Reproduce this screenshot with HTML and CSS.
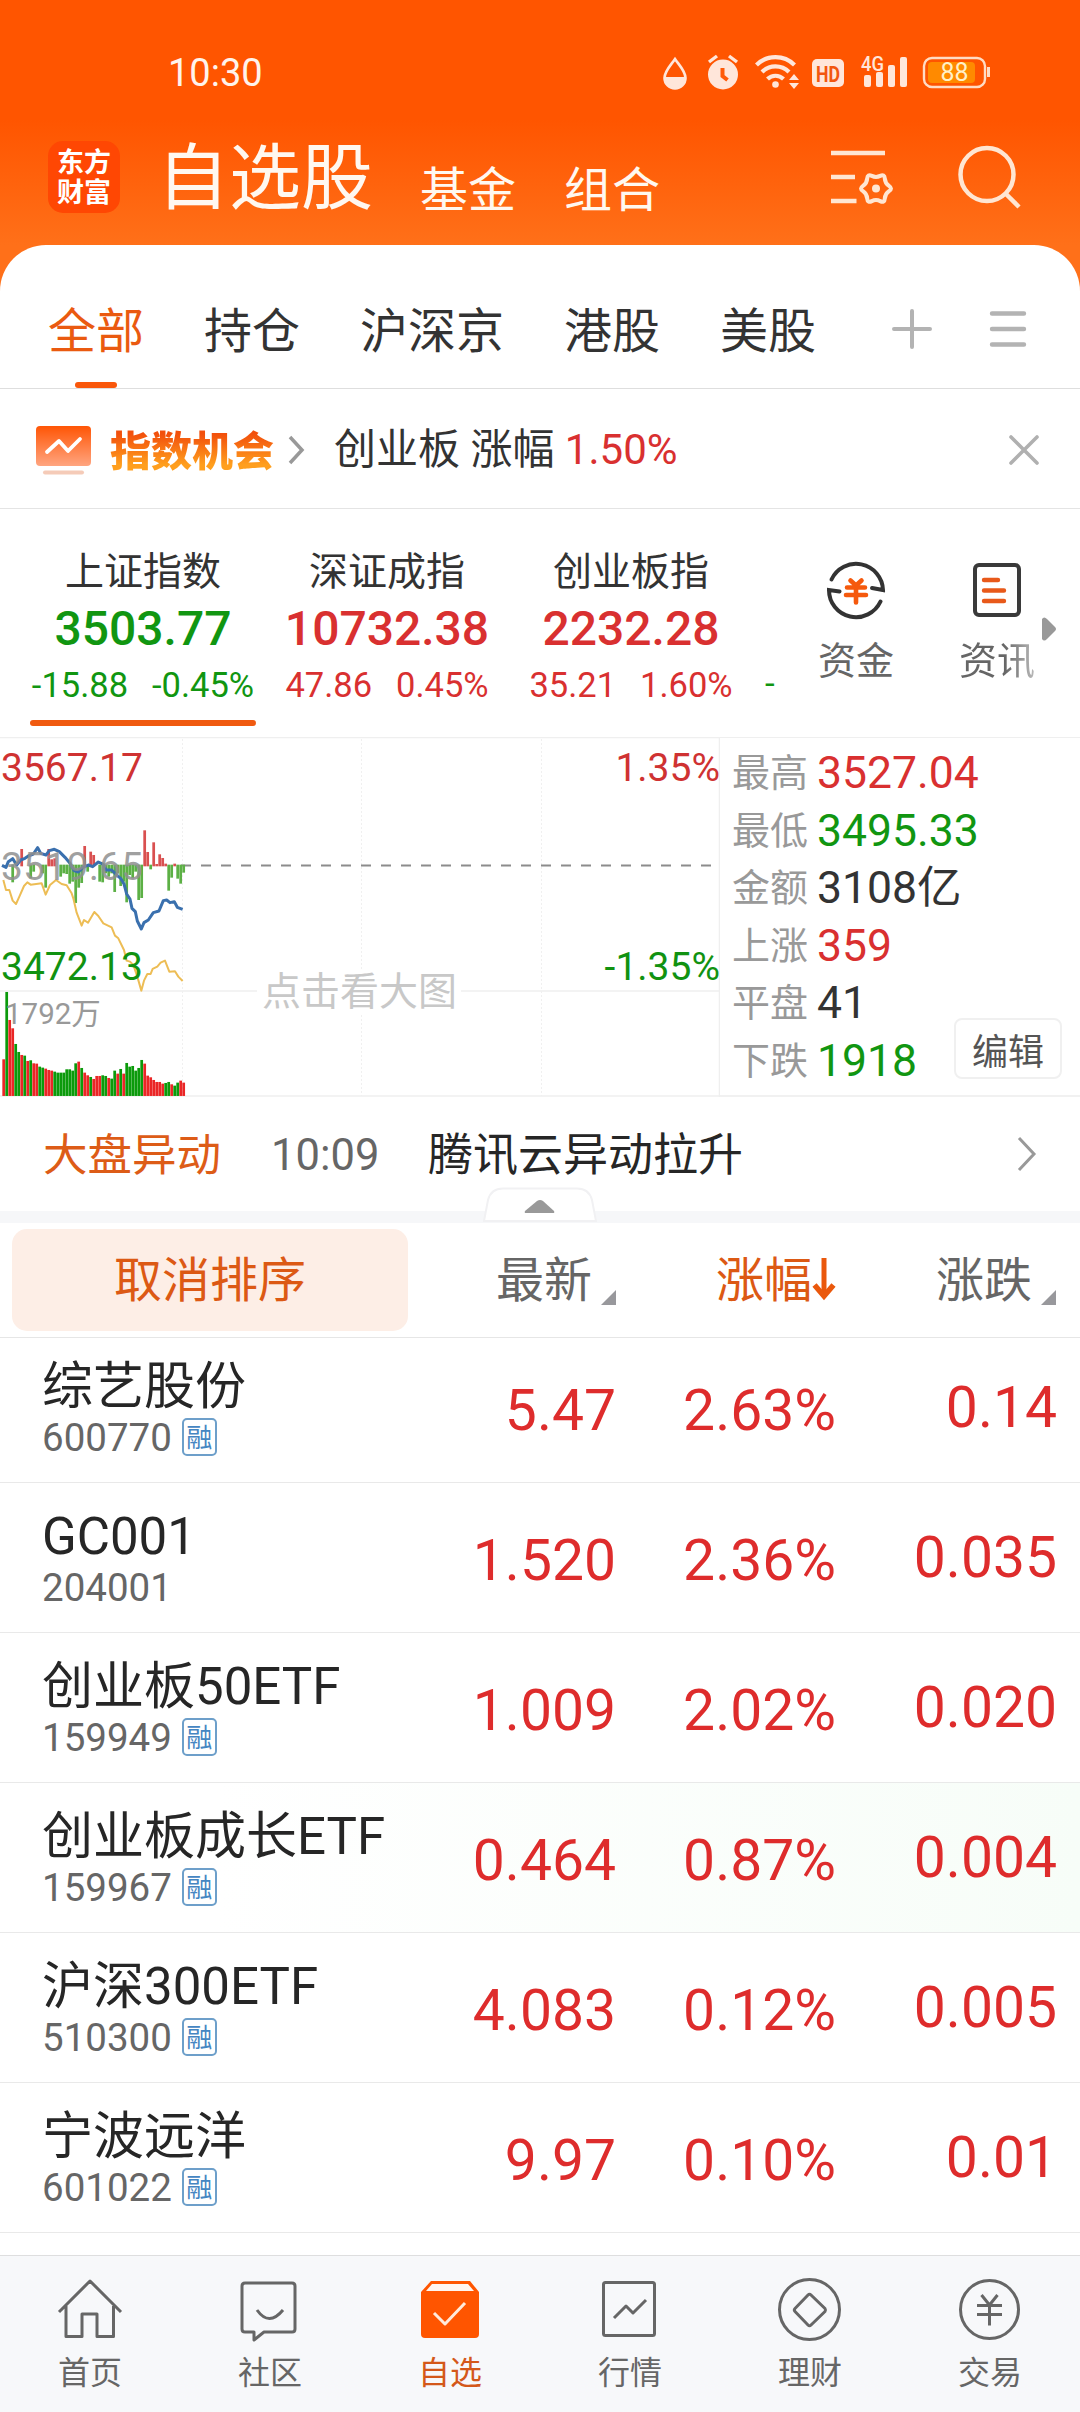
FILE: index.html
```html
<!DOCTYPE html>
<html lang="zh-CN">
<head>
    <meta charset="UTF-8">
    <meta name="viewport" content="width=device-width, initial-scale=1.0">
    <title>自选股</title>
    <link rel="stylesheet" href="styles.css">
</head>
<body>
<div class="header">
    <div class="status">
        <span class="time">10:30</span>
        <svg class="status-icons" width="330" height="40" viewBox="0 0 330 40">
            <g fill="#ffe6da">
                <path d="M15 7C11 13 4.500 19 4.500 26a10.500 10.500 0 0 0 21 0C25.500 19 19 13 15 7z" fill="none" stroke="#ffe6da" stroke-width="2.600"/>
                <path d="M4 25h22a11 11.500 0 0 1-22 0z"/>
                <circle cx="63" cy="22.500" r="15"/>
                <path d="M49 10l8-6M77 10l-8-6" stroke="#ffe6da" stroke-width="3.400"/>
                <path d="M62.500 16v8l5 4" fill="none" stroke="#ff5a08" stroke-width="4"/>
                <path d="M96.500 13a27 27 0 0 1 38 0M102 20a19 19 0 0 1 27 0M107.500 27a11.500 11.500 0 0 1 16 0" fill="none" stroke="#ffe6da" stroke-width="4.200"/>
                <circle cx="115.500" cy="32.500" r="3.300"/>
                <path d="M129 28l5-6 5 6zM129 31h10l-5 6z"/>
                <rect x="152" y="7" width="32" height="28" rx="5"/>
                <rect x="204" y="23" width="7" height="12" rx="2"/>
                <rect x="216" y="20" width="7" height="15" rx="2"/>
                <rect x="228" y="13" width="7" height="22" rx="2"/>
                <rect x="240" y="5" width="7" height="30" rx="2"/>
            </g>
            <text x="168" y="29.500" text-anchor="middle" font-size="22" font-weight="700" textLength="24" lengthAdjust="spacingAndGlyphs" fill="#f2560f">HD</text>
            <text x="201" y="18.500" font-size="21" font-weight="500" textLength="23" lengthAdjust="spacingAndGlyphs" fill="#ffe6da">4G</text>
            <rect x="264" y="6" width="61" height="29" rx="8" fill="none" stroke="#ffdcc4" stroke-width="2.400"/>
            <rect x="268" y="10" width="47" height="21" rx="4" fill="#ff8a00"/>
            <path d="M328.500 15v10" stroke="#ffdcc4" stroke-width="3"/>
            <text x="294.500" y="29" text-anchor="middle" font-size="25" textLength="28" lengthAdjust="spacingAndGlyphs" fill="#fff0c8">88</text>
        </svg>
    </div>
    <div class="topbar">
        <div class="logo">东方<br>财富</div>
        <span class="top-tab active">自选股</span>
        <span class="top-tab">基金</span>
        <span class="top-tab">组合</span>
        <svg class="filter" width="64" height="60" viewBox="0 0 64 60" fill="none" stroke="#ffe6d2" stroke-width="4.500">
            <path d="M0 5h54M0 29h24M0 53h25.500"/>
            <path d="M58 37.800Q62 40.500 58 43.200Q54.100 45.800 53.800 50.500Q53.500 55.200 49.200 53.100Q45 51 40.800 53.100Q36.500 55.200 36.200 50.500Q35.900 45.800 32 43.200Q28 40.500 32 37.800Q35.900 35.200 36.200 30.500Q36.500 25.800 40.800 27.900Q45 30 49.200 27.900Q53.500 25.800 53.800 30.500Q54.100 35.200 58 37.800z" stroke-width="4"/>
            <circle cx="45" cy="40.500" r="4" fill="#ffe6d2" stroke="none"/>
        </svg>
        <svg width="64" height="66" viewBox="0 0 64 66" fill="none" stroke="#ffe6d2" stroke-width="4.500">
            <circle cx="29" cy="29.500" r="26.500"/>
            <path d="M47 48L61 62"/>
        </svg>
    </div>
</div>

<div class="sheet">
    <div class="tabs">
        <span class="tab on">全部</span>
        <span class="tab">持仓</span>
        <span class="tab">沪深京</span>
        <span class="tab">港股</span>
        <span class="tab">美股</span>
        <svg class="plus" width="40" height="40" viewBox="0 0 40 40" stroke="#b3b3b3" stroke-width="4" stroke-linecap="round"><path d="M20 2v36M2 20h36"/></svg>
        <svg width="38" height="38" viewBox="0 0 38 38" stroke="#b3b3b3" stroke-width="4.400" stroke-linecap="round"><path d="M3 3.500h32M3 19h32M3 34.500h32"/></svg>
    </div>

    <div class="chance">
        <svg width="56" height="50" viewBox="0 0 56 50">
            <defs>
                <linearGradient id="chanceBg" x1="0" y1="0" x2="0" y2="1">
                    <stop offset="0" stop-color="#ff5505"/>
                    <stop offset="1" stop-color="#ffa580"/>
                </linearGradient>
            </defs>
            <rect x="0" y="1" width="55" height="40" rx="4" fill="url(#chanceBg)"/>
            <path d="M11 27l12-11 9 10 12-12" fill="none" stroke="#fff" stroke-width="3.800" stroke-linecap="round" stroke-linejoin="round"/>
            <rect x="7" y="45.500" width="41" height="4" rx="2" fill="#f5cbb8"/>
        </svg>
        <span class="chance-name">指数机会</span>
        <svg class="chance-arrow" width="18" height="30" viewBox="0 0 18 30" fill="none" stroke="#999" stroke-width="3.500"><path d="M2 2l12 13L2 28"/></svg>
        <span class="chance-text">创业板 涨幅 <em class="red">1.50%</em></span>
        <svg class="close" width="32" height="32" viewBox="0 0 32 32" stroke="#b0b0b0" stroke-width="3.600" stroke-linecap="round"><path d="M3 3l26 26M29 3L3 29"/></svg>
    </div>

    <div class="indexes">
        <div class="index green current">
            <p class="index-name">上证指数</p>
            <p class="index-num">3503.77</p>
            <p class="index-diff"><span>-15.88</span><span>-0.45%</span></p>
        </div>
        <div class="index red">
            <p class="index-name">深证成指</p>
            <p class="index-num">10732.38</p>
            <p class="index-diff"><span>47.86</span><span>0.45%</span></p>
        </div>
        <div class="index red">
            <p class="index-name">创业板指</p>
            <p class="index-num">2232.28</p>
            <p class="index-diff"><span>35.21</span><span>1.60%</span></p>
        </div>
        <div class="index-more green">-</div>
        <div class="tool">
            <svg width="60" height="60" viewBox="0 0 60 60" fill="none" stroke="#333" stroke-width="4">
                <path d="M5.500 19.500A27 27 0 0 1 57 30l-11-2" stroke-linecap="round"/>
                <path d="M54.500 41.500A27 27 0 0 1 3 30l10.500 1.500" stroke-linecap="round"/>
                <path d="M24.500 20.500l5.500 5 5.500-5M21 27.500h18M20 35h20M30 26v16.500" stroke="#f5590d" stroke-width="4.600" stroke-linecap="round"/>
            </svg>
            <span>资金</span>
        </div>
        <div class="tool">
            <svg width="60" height="60" viewBox="0 0 60 60" fill="none" stroke="#3a3a3a" stroke-width="4">
                <rect x="8" y="5" width="44" height="50" rx="4"/>
                <path d="M17 20h14M17 30.500h20M17 41h20" stroke="#e8591a" stroke-width="4.400" stroke-linecap="round"/>
            </svg>
            <span class="fade">资讯</span>
        </div>
        <svg class="more-arrow" width="16" height="26" viewBox="0 0 16 26"><path d="M1 3q2-3 5 0l8 8q2 2 0 4l-8 8q-3 3-5 0z" fill="#999"/></svg>
    </div>

    <div class="market">
        <svg class="chart" width="720" height="360" viewBox="0 0 720 360">
            <path d="M0 .500h720M0 254h720M0 359h720M719.500 0v360" stroke="#efefef" stroke-width="1.500" fill="none"/>
            <path d="M182.500 2v357M361.500 2v357M541.500 2v357" stroke="#f0f0f0" stroke-dasharray="2 2"/>
            <path d="M181 128.500h534" stroke="#8c8c8c" stroke-width="2" stroke-dasharray="10 10"/>
            <g transform="scale(.3333) translate(0 -21)">
                <g id="bars"></g>
                <g id="volume"></g>
                <polyline fill="none" stroke="#edbd55" stroke-width="6" stroke-linejoin="round" points="10,450 18,480 28,480 38,512 48,522 58,500 72,468 82,457 92,464 125,460 137,494 150,465 168,450 185,462 200,466 215,490 220,505 230,548 245,587 252,570 264,578 283,546 295,558 310,580 335,592 345,617 355,625 372,660 380,692 390,695 400,705 412,740 424,782 432,752 442,732 452,732 458,717 472,710 482,698 495,692 508,725 525,724 535,740 548,753"/>
                <polyline fill="none" stroke="#3a70ae" stroke-width="9" stroke-linejoin="round" points="6,406 18,412 25,395 38,386 50,405 62,390 75,385 85,378 100,372 113,353 122,370 138,375 148,362 163,358 178,365 195,382 210,400 222,422 235,426 250,412 265,405 278,410 295,396 310,403 318,420 335,420 352,437 362,445 372,462 380,492 390,507 396,535 406,545 412,573 424,597 432,578 445,570 460,548 477,543 490,512 500,510 510,518 523,515 532,532 548,538"/>
            </g>
            <rect x="257" y="234" width="204" height="42" fill="#fff"/>
            <g font-size="39">
                <text x="1" y="44" fill="#cf3232">3567.17</text>
                <text x="1" y="143" fill="#8f8f8f" fill-opacity=".85">3519.65</text>
                <text x="1" y="242.500" fill="#119211">3472.13</text>
                <text x="720" y="44" text-anchor="end" fill="#cf3232">1.35%</text>
                <text x="720" y="242.500" text-anchor="end" fill="#119211">-1.35%</text>
                <text x="262" y="268" fill="#c8c8c8">点击看大图</text>
                <text x="5" y="287" font-size="29.500" fill="#999">1792万</text>
            </g>
        </svg>
        <div class="stats">
            <p><label>最高</label><span class="red">3527.04</span></p>
            <p><label>最低</label><span class="green">3495.33</span></p>
            <p><label>金额</label><span>3108亿</span></p>
            <p><label>上涨</label><span class="red">359</span></p>
            <p><label>平盘</label><span>41</span></p>
            <p><label>下跌</label><span class="green">1918</span></p>
            <button class="edit">编辑</button>
        </div>
    </div>

    <div class="news">
        <span class="news-type">大盘异动</span>
        <span class="news-time">10:09</span>
        <span class="news-title">腾讯云异动拉升</span>
        <svg width="22" height="36" viewBox="0 0 22 36" fill="none" stroke="#999" stroke-width="3"><path d="M3 2l15 16L3 34"/></svg>
    </div>
    <div class="band">
        <svg class="fold" width="114" height="36" viewBox="0 0 114 36">
            <path d="M1 34L5 13Q8 1.500 20 1.500h74q12 0 15 11.500l4 21z" fill="#fff" stroke="#f1f1f3" stroke-width="2"/>
            <path d="M43 26q-2 0-1-2l12-10q3-2 6 0l11 10q1 2-1 2z" fill="#999"/>
        </svg>
    </div>

    <div class="list-head">
        <span class="cancel">取消排序</span>
        <span class="head-col">最新<i class="corner"></i></span>
        <span class="head-col sorted">涨幅<svg width="24" height="44" viewBox="0 0 24 44" fill="none" stroke="#ea580c"><path d="M12 1v38" stroke-width="5"/><path d="M2.500 28l9.500 11 9.500-11" stroke-width="5.500"/></svg></span>
        <span class="head-col last">涨跌<i class="corner"></i></span>
    </div>

    <div class="list">
        <div class="row first">
            <div class="stock"><p class="name">综艺股份</p><p class="code">600770<b>融</b></p></div>
            <span class="num">5.47</span><span class="num pct">2.63%</span><span class="num chg">0.14</span>
        </div>
        <div class="row">
            <div class="stock"><p class="name">GC001</p><p class="code">204001</p></div>
            <span class="num">1.520</span><span class="num pct">2.36%</span><span class="num chg">0.035</span>
        </div>
        <div class="row">
            <div class="stock"><p class="name">创业板50ETF</p><p class="code">159949<b>融</b></p></div>
            <span class="num">1.009</span><span class="num pct">2.02%</span><span class="num chg">0.020</span>
        </div>
        <div class="row flash">
            <div class="stock"><p class="name">创业板成长ETF</p><p class="code">159967<b>融</b></p></div>
            <span class="num">0.464</span><span class="num pct">0.87%</span><span class="num chg">0.004</span>
        </div>
        <div class="row">
            <div class="stock"><p class="name">沪深300ETF</p><p class="code">510300<b>融</b></p></div>
            <span class="num">4.083</span><span class="num pct">0.12%</span><span class="num chg">0.005</span>
        </div>
        <div class="row">
            <div class="stock"><p class="name">宁波远洋</p><p class="code">601022<b>融</b></p></div>
            <span class="num">9.97</span><span class="num pct">0.10%</span><span class="num chg">0.01</span>
        </div>
    </div>
</div>

<div class="nav">
    <div class="nav-item">
        <svg width="66" height="66" viewBox="0 0 66 66"><path d="M2 35L33 4l31 31M9 29v30.500h16V37h15v22.500h16.500V29"/></svg>
        <span>首页</span>
    </div>
    <div class="nav-item">
        <svg width="66" height="66" viewBox="0 0 66 66"><path d="M8 6h47q3 0 3 3v43q0 3-3 3H27l-10 8v-8H8q-3 0-3-3V9q0-3 3-3zM20 33q12 17 26 0"/></svg>
        <span>社区</span>
    </div>
    <div class="nav-item on">
        <svg width="66" height="66" viewBox="0 0 66 66">
            <path d="M4 15L14 4h39l9 11v42q0 4-4 4H8q-4 0-4-4z" fill="#ff5500" stroke="none"/>
            <path d="M15 7h36l6 7H9z" fill="#fff5ef" stroke="none"/>
            <path d="M17 36l11 11 20-21" stroke="#ffeadb"/>
        </svg>
        <span>自选</span>
    </div>
    <div class="nav-item">
        <svg width="66" height="66" viewBox="0 0 66 66"><rect x="6.500" y="5.500" width="51" height="53" rx="2"/><path d="M17 41l12-12 7 7 13-13"/></svg>
        <span>行情</span>
    </div>
    <div class="nav-item">
        <svg width="66" height="66" viewBox="0 0 66 66"><circle cx="32.500" cy="32.500" r="30"/><path d="M31 18q1.500-1.500 3 0l14 13.500q1 1.500 0 3l-14 13.500q-1.500 1.500-3 0L18 34.500q-1.500-1.500 0-3z"/></svg>
        <span>理财</span>
    </div>
    <div class="nav-item">
        <svg width="66" height="66" viewBox="0 0 66 66"><circle cx="32.500" cy="32.500" r="29"/><path d="M24.500 18l8 10 8-10M20 28.500h25M20 37.500h25M32.500 28v20.500"/></svg>
        <span>交易</span>
    </div>
</div>
<script src="script.js"></script>
</body>
</html>
```
FILE: styles.css
```css
body {
  margin: 0;
  width: 1080px;
  height: 2412px;
  overflow: hidden;
  background: #fff;
  color: #333;
  font-family: Roboto, "Noto Sans CJK SC", sans-serif;
  display: flex;
  flex-direction: column;
}
p {
  margin: 0;
}
svg {
  display: block;
  flex: none;
}
em, i, b {
  font-style: normal;
  font-weight: 400;
}
.red {
  color: #d93030;
}
.green {
  color: #119611;
}

/* header */
.header {
  height: 300px;
  box-sizing: border-box;
  background: linear-gradient(#ff5500 0, #ff5500 120px, #ff7019 245px);
}
.status {
  height: 92px;
  padding: 52px 90px 0 168px;
  box-sizing: border-box;
  display: flex;
  justify-content: space-between;
}
.time {
  font-size: 38px;
  line-height: 42px;
  color: #fff3ec;
}
.status-icons {
  font-family: Roboto, sans-serif;
}
.topbar {
  height: 153px;
  display: flex;
  align-items: center;
  padding: 0 58px 0 48px;
  color: #fff8f0;
}
.logo {
  width: 72px;
  height: 72px;
  margin: 16px 37px 0 0;
  padding-top: 5px;
  box-sizing: border-box;
  border-radius: 15px;
  background: #ff4703;
  text-align: center;
  font: 700 27px/30px "Noto Sans CJK SC", sans-serif;
  color: #fff;
}
.top-tab {
  font-size: 48px;
  line-height: 60px;
  margin: 44px 48px 0 0;
}
.top-tab.active {
  font-size: 72px;
  line-height: 80px;
  margin-top: 21px;
  margin-right: 47px;
}
.filter {
  margin: 18px 63px 0 auto;
}
.topbar svg:last-child {
  margin-top: 18px;
}

/* white sheet */
.sheet {
  margin-top: -55px;
  height: 2010px;
  background: #fff;
  border-radius: 46px 46px 0 0;
}
.tabs {
  height: 144px;
  box-sizing: border-box;
  padding: 0 53px 0 48px;
  border-bottom: 1px solid #dedede;
  display: flex;
  gap: 60px;
}
.tab {
  font-size: 48px;
  line-height: 142px;
  padding-top: 16px;
  height: 127px;
  position: relative;
}
.tab.on {
  color: #ea5a10;
}
.tab.on::after {
  content: "";
  position: absolute;
  left: 27px;
  bottom: 0;
  width: 42px;
  height: 6px;
  border-radius: 3px;
  background: #f9570b;
}
.tabs svg {
  margin-top: 65px;
}
.tabs .plus {
  margin: 64px -3px 0 auto;
}
.chance {
  height: 120px;
  box-sizing: border-box;
  border-bottom: 1px solid #e4e4e4;
  display: flex;
  align-items: center;
  padding: 2px 40px 0 36px;
}
.chance-name {
  margin: -4px 0 0 18px;
  font: 900 41px/56px "Noto Sans CJK SC", sans-serif;
  background: linear-gradient(#f2500c 25%, #ff9f1e 80%);
  background-clip: text;
  -webkit-background-clip: text;
  color: transparent;
}
.chance-arrow {
  margin: 0 28px 0 14px;
}
.chance-text {
  font-size: 42px;
  line-height: 60px;
}
.close {
  margin-left: auto;
}

/* index cards */
.indexes {
  height: 228px;
  box-sizing: border-box;
  padding-left: 21px;
  display: flex;
}
.index {
  width: 244px;
  box-sizing: border-box;
  padding-top: 37px;
  text-align: center;
  position: relative;
}
.index-name {
  font-size: 39px;
  line-height: 52px;
  color: #333;
}
.index-num {
  font-size: 48px;
  line-height: 56px;
  font-weight: 500;
  padding-top: 3px;
}
.index-diff {
  font-size: 34.5px;
  line-height: 44px;
  padding-top: 6px;
  display: flex;
  justify-content: center;
  gap: 24px;
}
.index.current::after {
  content: "";
  position: absolute;
  left: 9px;
  bottom: 11px;
  width: 226px;
  height: 6px;
  border-radius: 3px;
  background: #f05a10;
}
.index-more {
  width: 41px;
  padding: 154px 12px 0 12px;
  font-size: 35px;
  line-height: 42px;
  text-align: left;
}
.tool {
  width: 76px;
  margin-right: 65px;
  padding-top: 51px;
  display: flex;
  flex-direction: column;
  align-items: center;
  gap: 15px;
  font-size: 38px;
  line-height: 52px;
  color: #666;
}
.tool .fade {
  background: linear-gradient(90deg, #666 60%, #bbb);
  background-clip: text;
  -webkit-background-clip: text;
  color: transparent;
}
.more-arrow {
  margin: 107px 0 0 -59px;
}

/* chart and figures */
.market {
  height: 360px;
  display: flex;
}
.stats {
  flex: 1;
  box-sizing: border-box;
  padding: 7px 0 0 12px;
  border-top: 1px solid #efefef;
  border-bottom: 2px solid #f1f1f1;
  position: relative;
}
.stats p {
  display: flex;
  line-height: 57.6px;
  font-size: 44.5px;
}
.stats label {
  width: 85px;
  font-size: 38px;
  color: #999;
}
.edit {
  position: absolute;
  right: 18px;
  bottom: 16px;
  width: 108px;
  height: 61px;
  padding: 0;
  border: 2px solid #f0f0f0;
  border-radius: 8px;
  background: #fff;
  font-family: inherit;
  font-size: 36px;
  color: #555;
}

/* news line */
.news {
  height: 114px;
  display: flex;
  align-items: center;
  padding: 4px 42px 0 43px;
  box-sizing: border-box;
  font-size: 45px;
  line-height: 60px;
}
.news-type {
  width: 228px;
  font-size: 44.5px;
  color: #dd5c17;
}
.news-time {
  width: 157px;
  font-size: 43.5px;
  color: #666;
}
.news-title {
  color: #262626;
}
.news svg {
  margin: -4px 0 0 auto;
}
.band {
  height: 12px;
  background: #f6f7f9;
  position: relative;
}
.fold {
  position: absolute;
  left: 483px;
  top: -24px;
}

/* watch list */
.list-head {
  height: 115px;
  box-sizing: border-box;
  padding: 6px 0 6px 12px;
  border-bottom: 1px solid #e6e6e6;
  display: flex;
  font-size: 48px;
  line-height: 104px;
  color: #666;
}
.cancel {
  width: 396px;
  height: 102px;
  border-radius: 15px;
  background: #fdeee6;
  color: #dc5914;
  text-align: center;
}
.head-col {
  width: 208px;
  display: flex;
  justify-content: flex-end;
}
.head-col.sorted {
  width: 220px;
  color: #dc5914;
}
.head-col.last {
  width: 220px;
}
.head-col svg {
  margin-top: 28px;
}
.corner {
  width: 15px;
  height: 15px;
  margin: 61px 0 0 9px;
  background: #98989c;
  clip-path: polygon(100% 0, 100% 100%, 0 100%);
}
.list {
  overflow: hidden;
}
.row {
  height: 150px;
  box-sizing: border-box;
  border-bottom: 1px solid #e9e9e9;
  display: flex;
}
.row.first {
  margin-top: -5px;
}
.row.flash {
  background: linear-gradient(90deg, #fff 20%, #f7fdf8);
}
.stock {
  width: 400px;
  padding: 24px 0 0 42px;
  box-sizing: border-box;
}
.name {
  font-size: 51px;
  line-height: 60px;
  color: #262626;
  white-space: nowrap;
}
.code {
  font-size: 38.5px;
  line-height: 42px;
  color: #666;
  display: flex;
}
.code b {
  width: 31px;
  height: 34px;
  margin: 1px 0 0 10px;
  border: 2px solid #6d9fca;
  border-radius: 5px;
  font-size: 26px;
  line-height: 36px;
  text-align: center;
  color: #4586c2;
}
.num {
  width: 216px;
  font-size: 57px;
  line-height: 156px;
  text-align: right;
  color: #de2c2c;
}
.num.pct {
  width: 220px;
}
.num.chg {
  width: 221px;
  line-height: 150px;
}

/* bottom navigation */
.nav {
  height: 157px;
  box-sizing: border-box;
  border-top: 1px solid #dededf;
  background: #f7f8fa;
  display: flex;
}
.nav-item {
  width: 180px;
  padding-top: 21px;
  display: flex;
  flex-direction: column;
  align-items: center;
  gap: 9px;
  font-size: 32px;
  line-height: 43px;
  color: #666;
}
.nav-item svg {
  fill: none;
  stroke: #666;
  stroke-width: 3;
  stroke-linejoin: round;
}
.nav-item.on {
  color: #d4581a;
}
```
FILE: script.js
```js
var NS = 'http://www.w3.org/2000/svg';

function bar(parent, i, top, bottom, color) {
  var r = document.createElementNS(NS, 'rect');
  r.setAttribute('x', 7 + i * 9);
  r.setAttribute('y', top);
  r.setAttribute('width', 8.2);
  r.setAttribute('height', bottom - top);
  r.setAttribute('fill', color);
  document.getElementById(parent).appendChild(r);
}

// volume bars, one per minute
var tops = [988, 786, 870, 895, 942, 966, 975, 977, 993, 991, 1000, 1001, 1010, 1013, 1016, 1020, 1022, 1025, 1028, 1028, 1028,
  1018, 1018, 1022, 1000, 995, 1014, 1028, 1036, 1041, 1047, 1038, 1038, 1036, 1038, 1044, 1046, 1022, 1031, 1017, 1031,
  999, 1010, 1008, 1022, 1014, 990, 1001, 1037, 1042, 1050, 1056, 1056, 1061, 1059, 1056, 1063, 1067, 1058, 1052, 1058];
var sides = 'RGRRGGRGRGRRGGRRRGGGGGGGGRGRRGRRRGGRGGRGRGGGGGGRRRRRRRGGRGGRR';
for (var i = 0; i < tops.length; i++) {
  bar('volume', i, tops[i], 1098, sides[i] == 'R' ? '#ea2626' : '#0b9a0b');
}

// bars round the zero line
var moves = {
  3: 457, 6: 357, 9: 445, 10: 425, 13: 430, 14: 473, 15: 357, 16: 388, 17: 385, 19: 440, 20: 430, 21: 432, 22: 461, 23: 455,
  24: 519, 25: 473, 26: 459, 27: 348, 28: 425, 29: 365, 30: 375, 32: 455, 33: 457, 34: 430, 35: 440, 36: 430, 37: 486, 38: 430,
  39: 468, 40: 455, 41: 517, 42: 435, 43: 445, 44: 425, 45: 510, 46: 504, 47: 301, 48: 366, 49: 418, 50: 337, 51: 402, 52: 373,
  53: 384, 54: 401, 55: 482, 56: 443, 57: 401, 58: 446, 59: 461, 60: 428
};
for (var k in moves) {
  if (moves[k] < 406) {
    bar('bars', +k, moves[k], 409, '#d95050');
  } else {
    bar('bars', +k, 404, moves[k], '#5cb045');
  }
}
```
